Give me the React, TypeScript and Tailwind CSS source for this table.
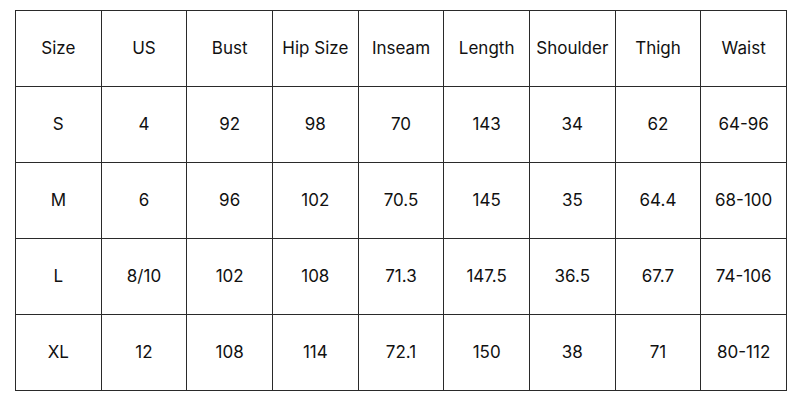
const headers = ['Size', 'US', 'Bust', 'Hip Size', 'Inseam', 'Length', 'Shoulder', 'Thigh', 'Waist']

const rows: string[][] = [
  ['S', '4', '92', '98', '70', '143', '34', '62', '64-96'],
  ['M', '6', '96', '102', '70.5', '145', '35', '64.4', '68-100'],
  ['L', '8/10', '102', '108', '71.3', '147.5', '36.5', '67.7', '74-106'],
  ['XL', '12', '108', '114', '72.1', '150', '38', '71', '80-112'],
]

export default function App() {
  return (
    <div className="w-[800px] h-[400px] bg-white pl-[15px] pt-[10px]" style={{ fontFamily: 'Inter, sans-serif' }}>
      <div className="w-[772px] grid grid-cols-9 border-r border-b border-[#2a2a2a] text-[17px] text-[#111]">
        {[headers, ...rows].map((row, r) =>
          row.map((cell, c) => (
            <div
              key={`${r}-${c}`}
              className="h-[76px] flex items-center justify-center pt-[1px] border-l border-t border-[#2a2a2a] whitespace-nowrap"
            >
              {cell}
            </div>
          ))
        )}
      </div>
    </div>
  )
}
